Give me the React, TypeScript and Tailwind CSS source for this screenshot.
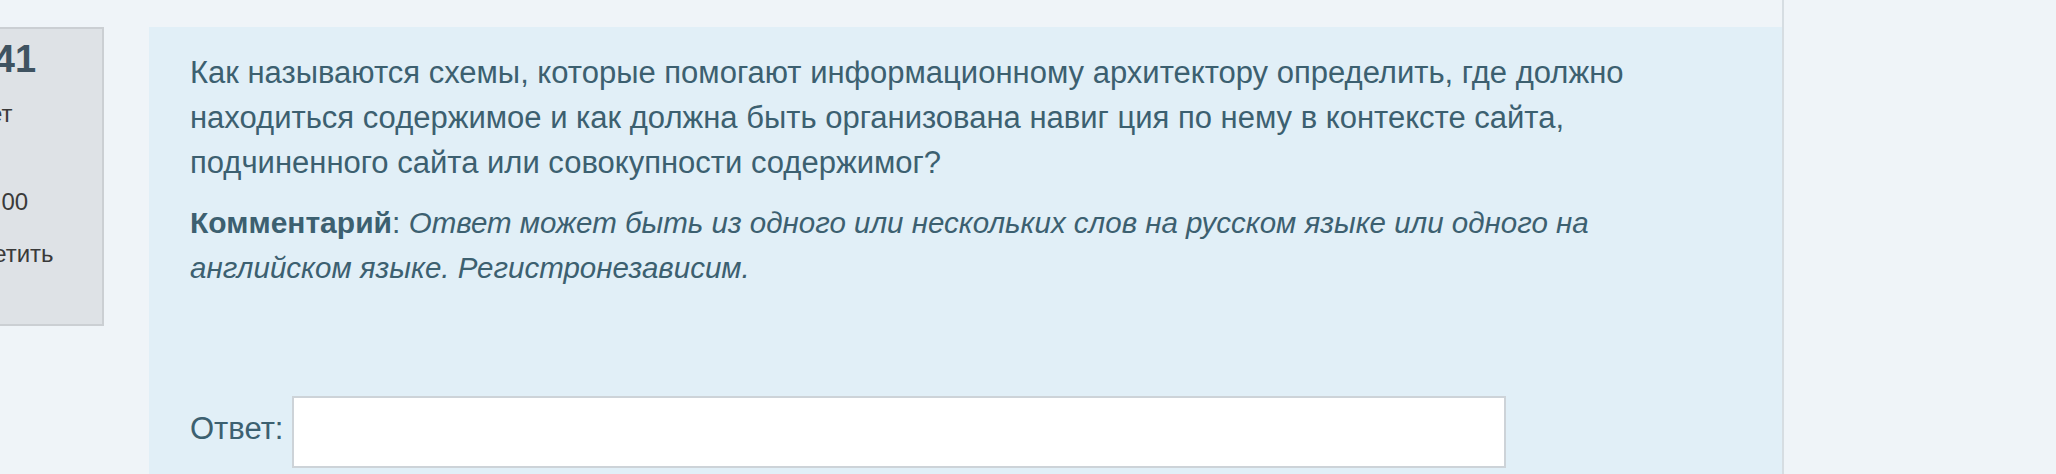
export default function App() {
  return (
    <div className="h-[474px] overflow-hidden bg-[#eff4f8] flex font-['Liberation_Sans',Arial,sans-serif]">
      <div className="w-[1784px] shrink-0 border-r-2 border-[#d6dde2] pt-[27px] flex items-start">
        {/* question info box, cut off at the left edge */}
        <div className="-ml-[101px] w-[205px] h-[299px] shrink-0 bg-[#dee2e6] border-2 border-[#cbcfd3] pt-[11px] pl-[10px] pr-[10px] text-[#3a3a3a]">
          <h3 className="pl-[6px] text-[38px] leading-[38px] font-bold text-[#3f5361] whitespace-nowrap">
            <span className="text-[21px] font-normal text-[#3a3a3a]">Вопрос </span>
            41
          </h3>
          <div className="mt-[8px] pl-[3px] text-[24px] leading-[44px]">
            Пока нет
            <br />
            ответа
          </div>
          <div className="text-[24px] leading-[44px]">Балл: 1,00</div>
          <div className="mt-[8px] text-[24px] leading-[44px]">
            <svg
              className="inline-block align-[-3px] w-[24px] h-[24px] mr-[12px]"
              viewBox="0 0 24 24"
              fill="none"
              stroke="#6a737b"
              strokeWidth="2"
            >
              <path d="M4 22V3M4 4h13l-3 4 3 4H4" />
            </svg>
            Отметить вопрос
          </div>
        </div>

        {/* question formulation */}
        <div className="ml-[45px] w-[1633px] h-[460px] shrink-0 bg-[#e1eff7] pt-[23px] px-[41px] text-[31px] leading-[45px] text-[#3c6070]">
          <p className="whitespace-nowrap">
            Как называются схемы, которые помогают информационному архитектору
            определить, где должно
            <br />
            находиться содержимое и как должна быть организована навиг ция по
            нему в контексте сайта,
            <br />
            подчиненного сайта или совокупности содержимог?
          </p>
          <p className="mt-[15px] whitespace-nowrap text-[30px]">
            <strong className="font-bold">Комментарий</strong>:{" "}
            <em className="italic text-[29.5px]">
              Ответ может быть из одного или нескольких слов на русском языке или
              одного на
              <br />
              английском языке. Регистронезависим.
            </em>
          </p>
          <div className="mt-[106px] flex items-center">
            <label className="w-[102px] shrink-0 pb-[8px]">Ответ:</label>
            <input
              type="text"
              className="w-[1214px] h-[72px] bg-white border-2 border-[#cdd3d8] outline-none px-3"
            />
          </div>
        </div>
      </div>
      <div className="flex-1" />
    </div>
  );
}
